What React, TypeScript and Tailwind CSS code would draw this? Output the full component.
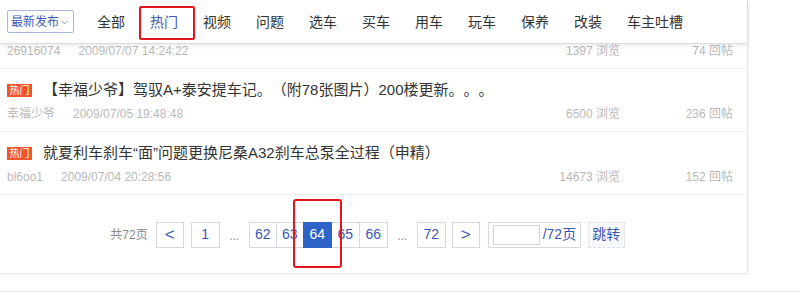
import React from 'react';

const navItems = ['全部', '热门', '视频', '问题', '选车', '买车', '用车', '玩车', '保养', '改装', '车主吐槽'];

// first row is scrolled up under the tab bar, only its meta line shows
const posts = [
    { hot: false, title: '', user: '26916074', time: '2009/07/07 14:24:22', views: 1397, replies: 74 },
    { hot: true, title: '【幸福少爷】驾驭A+泰安提车记。（附78张图片）200楼更新。。。', user: '幸福少爷', time: '2009/07/05 19:48:48', views: 6500, replies: 236 },
    { hot: true, title: '就夏利车刹车“面”问题更换尼桑A32刹车总泵全过程（申精）', user: 'bl6oo1', time: '2009/07/04 20:28:56', views: 14673, replies: 152 },
];

const PageBtn = ({ children, className = '' }: { children: React.ReactNode; className?: string }) => (
    <span className={`flex items-center justify-center h-[26px] border border-[#d3d8e3] bg-white text-[14px] text-[#3a56b4] ${className}`}>
        {children}
    </span>
);

const App = () => {
    return <div className="relative w-[800px] h-[305px] overflow-hidden bg-white font-['Liberation_Sans','Noto_Sans_CJK_SC',sans-serif]">
        {/* sticky tab bar, lies over the list */}
        <div className="absolute top-0 left-0 z-10 w-[748px] h-[44px] bg-white border-r border-b border-[#dcdcdc] shadow-[0_2px_4px_rgba(0,0,0,0.08)] flex items-center pl-[7px]">
            <span className="flex items-center w-[67px] h-[23px] border border-[#a9b7e2] rounded-[2px] pl-[3px] text-[12px] leading-[16px] text-[#3e5ab8]">
                最新发布
                <svg width="7" height="5" viewBox="0 0 7 5" className="ml-[2px] mt-[1px]">
                    <path d="M0.5 0.8 L3.5 3.8 L6.5 0.8" fill="none" stroke="#7d8fcc" strokeWidth="1" />
                </svg>
            </span>
            <ul className="flex items-center gap-[25px] ml-[23px]">
                {navItems.map((item, i) => (
                    <li key={i} className={`relative text-[14px] leading-[20px] ${i === 1 ? 'text-[#3e5ab8]' : 'text-[#333333]'}`}>
                        {item}
                        {i === 1 && <span className="absolute -left-[11px] -right-[17px] -top-[6px] -bottom-[8px] border-2 border-[#e2161c] rounded-[2px]" />}
                    </li>
                ))}
            </ul>
        </div>

        <div className="w-[748px] h-[274px] pt-[6px] border-r border-b border-[#e6e6e6] shadow-[1px_1px_3px_rgba(0,0,0,0.05)]">
            <ul className="flex flex-col">
                {posts.map((p, i) => (
                    <li key={i} className="h-[63px] border-b border-[#efefef] pl-[7px] pr-[14px] pt-[11px]">
                        <div className="flex items-center h-[20px]">
                            {p.hot && <span className="mr-[11px] w-[25px] h-[13px] bg-[#f2552c] text-white text-[10px] leading-[13px] text-center">热门</span>}
                            <span className="text-[15px] leading-[20px] text-[#333333] whitespace-nowrap [text-spacing-trim:space-all]">{p.title}</span>
                        </div>
                        <div className="mt-[6px] flex text-[12px] leading-[16px] text-[#b9b9b9]">
                            <span>{p.user}</span>
                            <span className="ml-[18px]">{p.time}</span>
                            <span className="ml-auto">{p.views} 浏览</span>
                            <span className="w-[113px] text-right">{p.replies} 回帖</span>
                        </div>
                    </li>
                ))}
            </ul>

            <div className="h-[79px] flex items-center justify-center pr-[12px]">
                <span className="mr-[8px] text-[12px] text-[#888888]">共72页</span>
                <PageBtn className="w-[28px] mr-[7px] text-[17px]">&lt;</PageBtn>
                <PageBtn className="w-[29px]">1</PageBtn>
                <span className="w-[29px] text-center text-[12px] text-[#888888] pt-[3px]">...</span>
                <PageBtn className="w-[28px]">62</PageBtn>
                <PageBtn className="w-[28px] -ml-px">63</PageBtn>
                <span className="relative -ml-px">
                    <span className="flex items-center justify-center w-[29px] h-[26px] bg-[#2e64c8] border border-[#2e64c8] text-[14px] text-white">64</span>
                    <span className="absolute -left-[10px] -right-[10px] -top-[23px] -bottom-[20px] border-2 border-[#e2161c] rounded-[3px]" />
                </span>
                <PageBtn className="w-[29px] -ml-px">65</PageBtn>
                <PageBtn className="w-[29px] -ml-px">66</PageBtn>
                <span className="w-[29px] text-center text-[12px] text-[#888888] pt-[3px]">...</span>
                <PageBtn className="w-[29px] mr-[6px]">72</PageBtn>
                <PageBtn className="w-[28px] mr-[8px] text-[17px]">&gt;</PageBtn>
                <span className="flex items-center w-[93px] h-[26px] border border-[#d3d8e3] pl-[4px]">
                    <input type="text" className="w-[47px] h-[20px] border border-[#cfd3da] bg-white outline-none" />
                    <span className="ml-[3px] text-[14px] text-[#3a56b4]">/72页</span>
                </span>
                <span className="ml-[7px] flex items-center justify-center w-[37px] h-[26px] border border-dashed border-[#dde1e8] bg-[#f7f8fb] text-[14px] text-[#3a56b4]">跳转</span>
            </div>
        </div>

        <div className="mt-[17px] border-t border-[#e4e4e4]" />
    </div>;
}

export default App;
